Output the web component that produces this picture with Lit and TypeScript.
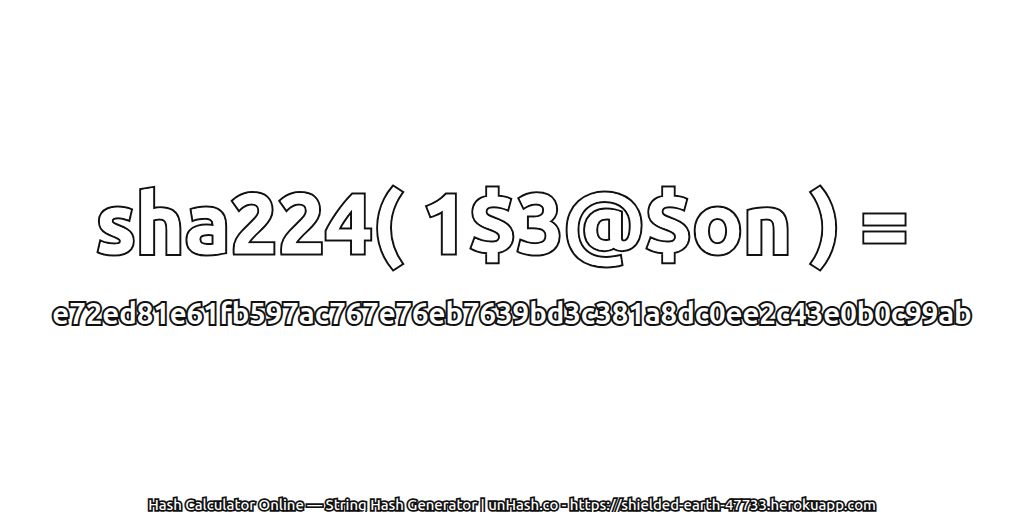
import { LitElement, html, css } from "lit";
import { customElement } from "lit/decorators.js";

const TITLE = "sha224( 1$3@$on ) =\u00a0";

@customElement("app-root")
export class AppRoot extends LitElement {
  static styles = css`
    :host { display: block; width: 1024px; height: 512px; background: #fff; overflow: hidden; }
    .page { width: 1024px; height: 512px; display: flex; flex-direction: column; align-items: center; font-family: "Ubuntu", "Noto Sans", "DejaVu Sans", sans-serif; color: #fff; }
    .spacer { height: 172px; flex: none; }
    .title { position: relative; font-size: 84px; font-weight: 700; line-height: 100px; white-space: pre; -webkit-text-stroke: 5px #111; paint-order: stroke fill; }
    .title::after { content: attr(data-text); position: absolute; left: 0; top: 0; color: #fff; -webkit-text-stroke: 1px #fff; }
    .hash { font-size: 29.3px; font-weight: 700; line-height: 36px; margin-top: 24px; white-space: nowrap; -webkit-text-stroke: 4px #111; paint-order: stroke fill; }
    .foot { margin-top: auto; font-size: 14.9px; font-weight: 500; line-height: 18px; margin-bottom: -2px; white-space: nowrap; -webkit-text-stroke: 3.5px #111; paint-order: stroke fill; }
  `;
  render() {
    return html`<div class="page">
      <div class="spacer"></div>
      <div class="title" data-text=${TITLE}>${TITLE}</div>
      <div class="hash">e72ed81e61fb597ac767e76eb7639bd3c381a8dc0ee2c43e0b0c99ab</div>
      <div class="foot">Hash Calculator Online — String Hash Generator | unHash.co - https://shielded-earth-47733.herokuapp.com</div>
    </div>`;
  }
}
